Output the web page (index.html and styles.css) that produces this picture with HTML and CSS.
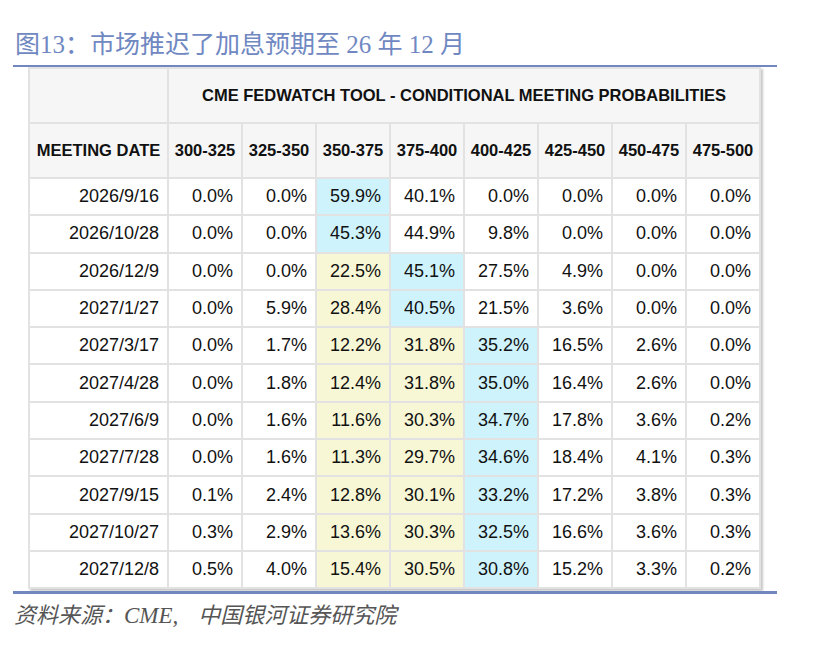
FILE: index.html
```html
<!DOCTYPE html>
<html lang="zh">
<head>
<meta charset="utf-8">
<title>CME FedWatch</title>
<link rel="stylesheet" href="styles.css">
</head>
<body>
<div class="page">
  <h1 class="title">图13：市场推迟了加息预期至 26 年 12 月</h1>
  <div class="rule"></div>
  <table class="fw">
    <colgroup>
      <col class="c-date"><col class="c-num"><col class="c-num"><col class="c-num"><col class="c-num"><col class="c-num"><col class="c-num"><col class="c-num"><col class="c-num">
    </colgroup>
    <thead>
      <tr class="h1"><th></th><th colspan="8">CME FEDWATCH TOOL - CONDITIONAL MEETING PROBABILITIES</th></tr>
      <tr class="h2"><th>MEETING DATE</th><th>300-325</th><th>325-350</th><th>350-375</th><th>375-400</th><th>400-425</th><th>425-450</th><th>450-475</th><th>475-500</th></tr>
    </thead>
    <tbody>
      <tr><td>2026/9/16</td><td>0.0%</td><td>0.0%</td><td class="cy">59.9%</td><td>40.1%</td><td>0.0%</td><td>0.0%</td><td>0.0%</td><td>0.0%</td></tr>
      <tr><td>2026/10/28</td><td>0.0%</td><td>0.0%</td><td class="cy">45.3%</td><td>44.9%</td><td>9.8%</td><td>0.0%</td><td>0.0%</td><td>0.0%</td></tr>
      <tr><td>2026/12/9</td><td>0.0%</td><td>0.0%</td><td class="yl">22.5%</td><td class="cy">45.1%</td><td>27.5%</td><td>4.9%</td><td>0.0%</td><td>0.0%</td></tr>
      <tr><td>2027/1/27</td><td>0.0%</td><td>5.9%</td><td class="yl">28.4%</td><td class="cy">40.5%</td><td>21.5%</td><td>3.6%</td><td>0.0%</td><td>0.0%</td></tr>
      <tr><td>2027/3/17</td><td>0.0%</td><td>1.7%</td><td class="yl">12.2%</td><td class="yl">31.8%</td><td class="cy">35.2%</td><td>16.5%</td><td>2.6%</td><td>0.0%</td></tr>
      <tr><td>2027/4/28</td><td>0.0%</td><td>1.8%</td><td class="yl">12.4%</td><td class="yl">31.8%</td><td class="cy">35.0%</td><td>16.4%</td><td>2.6%</td><td>0.0%</td></tr>
      <tr><td>2027/6/9</td><td>0.0%</td><td>1.6%</td><td class="yl">11.6%</td><td class="yl">30.3%</td><td class="cy">34.7%</td><td>17.8%</td><td>3.6%</td><td>0.2%</td></tr>
      <tr><td>2027/7/28</td><td>0.0%</td><td>1.6%</td><td class="yl">11.3%</td><td class="yl">29.7%</td><td class="cy">34.6%</td><td>18.4%</td><td>4.1%</td><td>0.3%</td></tr>
      <tr><td>2027/9/15</td><td>0.1%</td><td>2.4%</td><td class="yl">12.8%</td><td class="yl">30.1%</td><td class="cy">33.2%</td><td>17.2%</td><td>3.8%</td><td>0.3%</td></tr>
      <tr><td>2027/10/27</td><td>0.3%</td><td>2.9%</td><td class="yl">13.6%</td><td class="yl">30.3%</td><td class="cy">32.5%</td><td>16.6%</td><td>3.6%</td><td>0.3%</td></tr>
      <tr><td>2027/12/8</td><td>0.5%</td><td>4.0%</td><td class="yl">15.4%</td><td class="yl">30.5%</td><td class="cy">30.8%</td><td>15.2%</td><td>3.3%</td><td>0.2%</td></tr>
    </tbody>
  </table>
  <div class="rule rule-bottom"></div>
  <p class="source">资料来源：<span class="latin">CME,</span><span class="org">中国银河证券研究院</span></p>
</div>
</body>
</html>
```
FILE: styles.css
```css
html, body {
  margin: 0;
  padding: 0;
  background: #ffffff;
}

.page {
  padding-top: 29px;
}

.title {
  margin: 0 0 0 15px;
  font-family: "Liberation Serif", "Noto Sans CJK SC", serif;
  font-weight: normal;
  font-size: 25px;
  line-height: 31px;
  height: 36px;
  color: #7088c2;
}

.rule {
  margin-left: 13px;
  width: 764px;
  height: 2px;
  background: #7088bf;
}

.rule-bottom {
  height: 3px;
  margin-top: 2px;
}

.fw {
  margin-left: 28px;
  border-collapse: collapse;
  table-layout: fixed;
  width: 733px;
  font-family: "Liberation Sans", Arial, sans-serif;
  color: #111;
  border: 2px solid #e4e4e4;
  box-shadow: 2px 2px 2px rgba(0, 0, 0, 0.22);
}

.c-date { width: 139px; }
.c-num { width: 74px; }

.fw th,
.fw td {
  border: 2px solid #e2e2e2;
  padding: 0 8px 0 0;
}

.fw th {
  background: #f6f6f6;
  font-size: 16.5px;
  font-weight: bold;
  text-align: center;
  padding: 0;
}

.fw .h1 th { height: 53px; }
.fw .h2 th { height: 53px; }

.fw td {
  height: 35.3px;
  font-size: 18px;
  text-align: right;
  background: #ffffff;
}

.fw td.yl { background: #f7f7d6; }
.fw td.cy { background: #cef3fc; }

.source {
  margin: 9px 0 0 14px;
  font-family: "Liberation Serif", "Noto Sans CJK SC", serif;
  font-style: italic;
  font-size: 22px;
  line-height: 26px;
  color: #555;
}

.source .latin {
  font-size: 23px;
}

.source .org {
  margin-left: 20px;
}
```
